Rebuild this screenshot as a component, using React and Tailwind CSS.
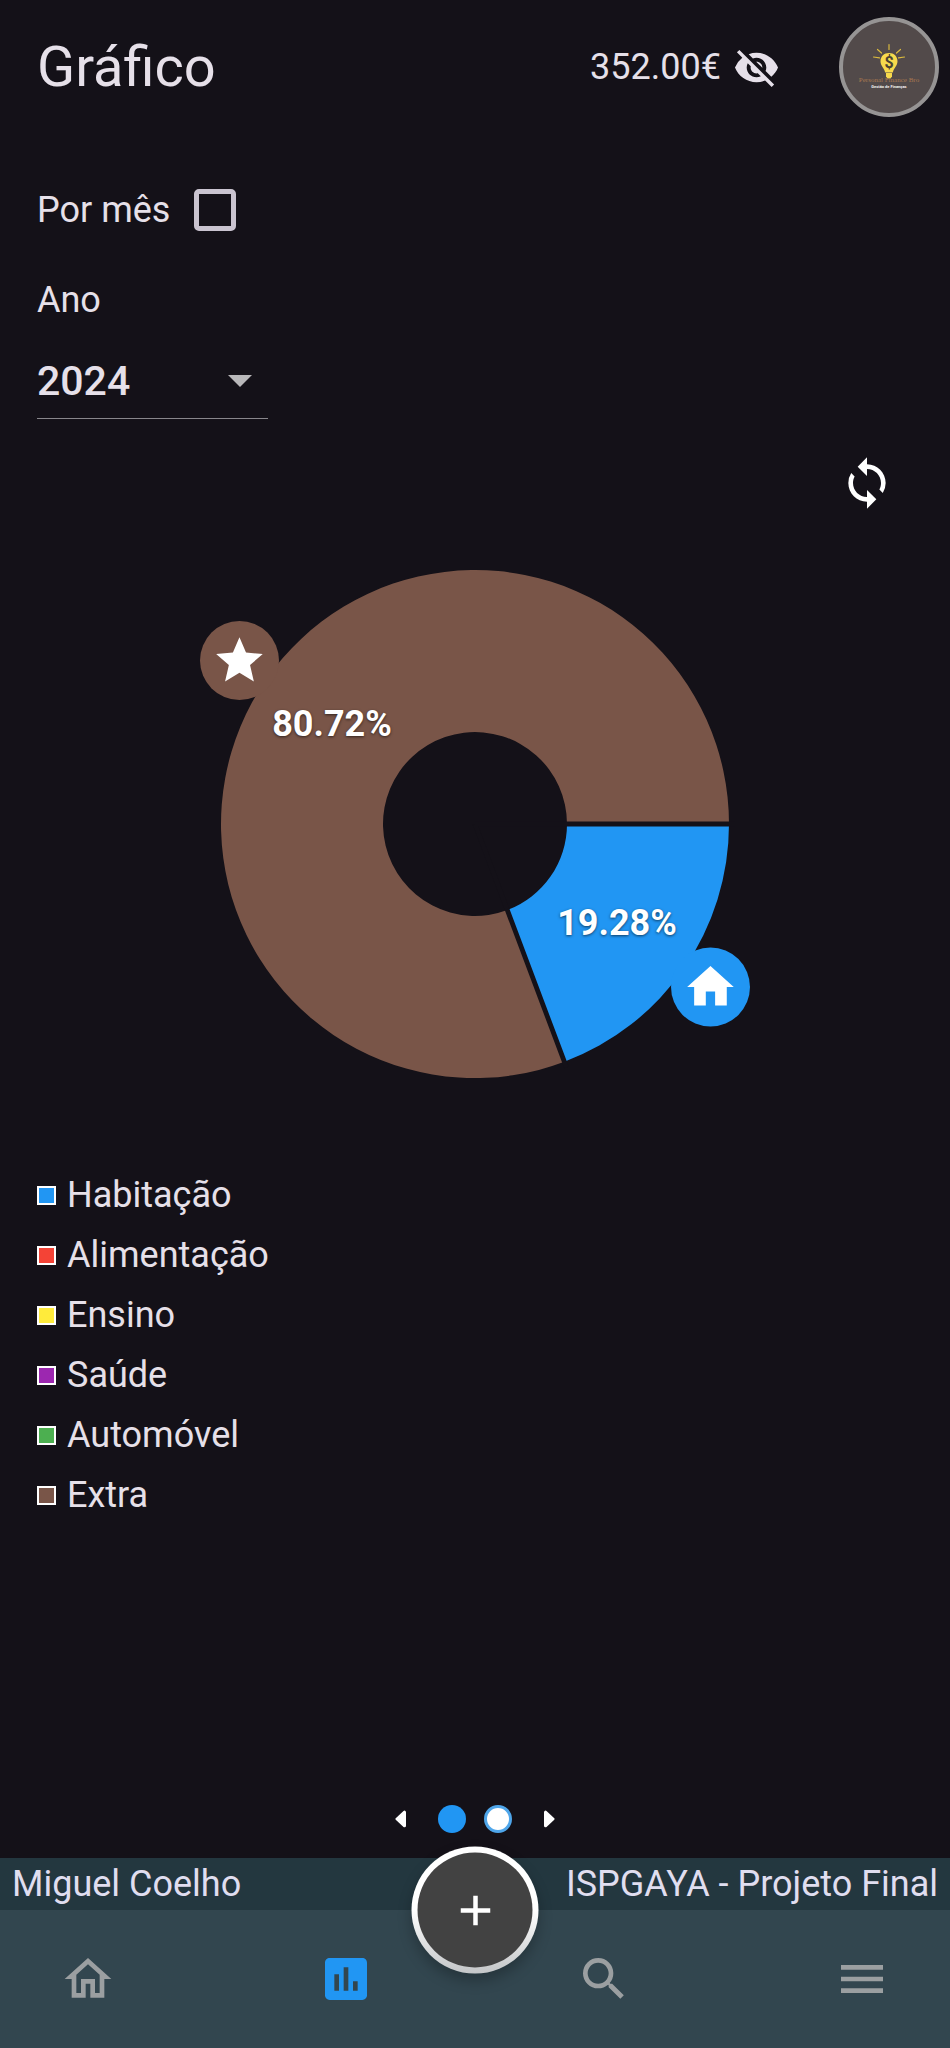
import { useState } from "react";
import {
  MdVisibilityOff,
  MdSync,
  MdSearch,
  MdMenu,
  MdInsertChart,
  MdOutlineHome,
} from "react-icons/md";

const CATEGORIES = [
  { name: "Habitação", color: "bg-[#2196f3]" },
  { name: "Alimentação", color: "bg-[#f44336]" },
  { name: "Ensino", color: "bg-[#ffeb3b]" },
  { name: "Saúde", color: "bg-[#9c27b0]" },
  { name: "Automóvel", color: "bg-[#4caf50]" },
  { name: "Extra", color: "bg-[#795548]" },
];

function Avatar() {
  return (
    <button
      type="button"
      aria-label="Perfil"
      className="size-[100px] overflow-hidden rounded-full border-4 border-[#969494] bg-[#524a4a]"
    >
      <svg viewBox="0 0 92 92" className="size-full">
        <g stroke="#d9b93f" strokeWidth="1.2" strokeLinecap="round">
          <path d="M46 23.500v5M34.500 28.500l4 3.500M57.500 28.500l-4 3.500M30.500 36l6 .8M61.500 36l-6 .8" />
        </g>
        <path
          d="M46 32c-5 0-8.500 3.500-8.500 8.300 0 4.500 3.500 6.500 4.700 11.200h7.600c1.200-4.700 4.700-6.700 4.700-11.200 0-4.800-3.500-8.300-8.500-8.300z"
          fill="#f7d94c"
        />
        <path d="M43 52h6v3.500l-1.500 2h-3l-1.500-2z" fill="#f7d94c" />
        <text x="46" y="47" textAnchor="middle" fontSize="16" fontWeight="700" fill="#4a4233">
          $
        </text>
        <text
          x="46"
          y="61"
          textAnchor="middle"
          fontSize="7"
          fill="#a87850"
          className="font-['Liberation_Serif',serif]"
        >
          Personal Finance Bro
        </text>
        <text x="46" y="66.500" textAnchor="middle" fontSize="4" fontWeight="700" fill="#f2f0ee">
          Gestão de Finanças
        </text>
      </svg>
    </button>
  );
}

function Donut() {
  return (
    <svg
      viewBox="-300 -264 600 530"
      className="mx-auto mt-[49px] block w-full max-w-[600px]"
      role="img"
      aria-label="Extra 80.72%, Habitação 19.28%"
    >
      <path d="M254 0A254 254 0 1 0 89.400 237.800L32.400 86.100A92 92 0 1 1 92 0Z" fill="#795548" />
      <path d="M254 0A254 254 0 0 1 89.400 237.800L32.400 86.100A92 92 0 0 0 92 0Z" fill="#2196f3" />
      <path d="M0 0H260M0 0L91.500 243.400" stroke="#141118" strokeWidth="4.800" />

      <circle cx="-235.500" cy="-163.500" r="39.500" fill="#795548" />
      <path
        transform="translate(-263.500 -191.500) scale(2.330)"
        fill="#fff"
        d="M12 17.270L18.180 21l-1.640-7.030L22 9.240l-7.190-.61L12 2 9.190 8.630 2 9.240l5.460 4.730L5.820 21z"
      />
      <circle cx="235.500" cy="163" r="39.500" fill="#2196f3" />
      <path
        transform="translate(207.500 135) scale(2.330)"
        fill="#fff"
        d="M10 20v-6h4v6h5v-8h3L12 3 2 12h3v8z"
      />

      <g
        className="[text-shadow:0_1px_3px_rgba(0,0,0,0.6)]"
        fill="#fff"
        fontSize="36"
        fontWeight="700"
        textAnchor="middle"
      >
        <text x="-143" y="-88">80.72%</text>
        <text x="142" y="111">19.28%</text>
      </g>
    </svg>
  );
}

function Pager({ page, onChange }) {
  const dot = "size-7 rounded-full";
  return (
    <div className="mt-auto mb-[25px] flex items-center justify-center pt-10">
      <button type="button" aria-label="Anterior" onClick={() => onChange(0)} className="mr-8">
        <svg viewBox="0 0 11 18" className="h-[18px] w-[11px]">
          <path d="M9.500 2.200V15.800L2 9Z" fill="#fff" stroke="#fff" strokeWidth="3" strokeLinejoin="round" />
        </svg>
      </button>
      <div className="flex gap-[18px]">
        {[0, 1].map((i) => (
          <button
            key={i}
            type="button"
            aria-label={`Página ${i + 1}`}
            onClick={() => onChange(i)}
            className={
              i === page ? `${dot} bg-[#2196f3]` : `${dot} border-[3px] border-[#4fa6ea] bg-white`
            }
          />
        ))}
      </div>
      <button type="button" aria-label="Seguinte" onClick={() => onChange(1)} className="ml-8">
        <svg viewBox="0 0 11 18" className="h-[18px] w-[11px]">
          <path d="M1.500 2.200V15.800L9 9Z" fill="#fff" stroke="#fff" strokeWidth="3" strokeLinejoin="round" />
        </svg>
      </button>
    </div>
  );
}

export default function App() {
  const [page, setPage] = useState(0);

  return (
    <div className="flex min-h-screen flex-col bg-[#141118] font-['Roboto',sans-serif] text-[36px] leading-[40px] text-[#e6e0e9]">
      <header className="flex h-[134px] items-center pr-[11px] pl-[37px]">
        <h1 className="text-[56px] leading-[64px]">Gráfico</h1>
        <span className="ml-auto">352.00€</span>
        <button type="button" aria-label="Ocultar saldo" className="mr-[59px] ml-3">
          <MdVisibilityOff className="size-[47px]" />
        </button>
        <Avatar />
      </header>

      <main className="flex flex-1 flex-col">
        <div className="mt-12 flex h-14 items-center gap-6 pl-[37px]">
          <label htmlFor="por-mes">Por mês</label>
          <input
            id="por-mes"
            type="checkbox"
            className="size-[42px] appearance-none rounded-[5px] border-[5px] border-[#cac4d0] checked:bg-[#2196f3]"
          />
        </div>

        <label htmlFor="ano" className="mt-[42px] self-start pl-[37px]">
          Ano
        </label>
        <div className="mt-6 ml-[37px] grid w-[231px] items-center border-b border-[#88868b]">
          <select
            id="ano"
            defaultValue="2024"
            className="col-start-1 row-start-1 h-[74px] w-full appearance-none bg-transparent text-[41px] leading-[48px] font-medium"
          >
            <option>2024</option>
            <option>2023</option>
          </select>
          <svg
            viewBox="0 0 24 12"
            className="pointer-events-none col-start-1 row-start-1 mr-4 h-3 w-6 justify-self-end"
          >
            <path d="M0 0H24L12 12Z" fill="#b9b8ba" />
          </svg>
        </div>

        <button type="button" aria-label="Atualizar" className="mt-9 mr-[55px] self-end text-white">
          <MdSync className="size-14" />
        </button>

        <Donut />

        <ul className="mt-[75px] pl-[37px]">
          {CATEGORIES.map(({ name, color }) => (
            <li key={name} className="flex h-[60px] items-center gap-[11px]">
              <span className={`size-[19px] border-2 border-white ${color}`} />
              {name}
            </li>
          ))}
        </ul>

        <Pager page={page} onChange={setPage} />
      </main>

      <footer className="relative">
        <div className="flex h-[52px] items-center justify-between bg-[#23373f] px-3 text-[#e0def0]">
          <span>Miguel Coelho</span>
          <span>ISPGAYA - Projeto Final</span>
        </div>
        <nav className="flex h-[138px] items-center justify-between bg-[#32464f] px-[60px] text-[#9b9fa1]">
          <a href="#inicio" aria-label="Início">
            <MdOutlineHome className="size-14" />
          </a>
          <a href="#grafico" aria-label="Gráfico" className="text-[#2196f3]">
            <MdInsertChart className="size-14" />
          </a>
          <a href="#pesquisa" aria-label="Pesquisar">
            <MdSearch className="size-14" />
          </a>
          <a href="#menu" aria-label="Menu">
            <MdMenu className="size-14" />
          </a>
        </nav>
        <button
          type="button"
          aria-label="Adicionar"
          className="absolute top-[52px] left-1/2 size-[127px] -translate-x-1/2 -translate-y-1/2 rounded-full bg-linear-to-b from-white from-50% to-[#c4c6c8] p-[6px] shadow-[0_7px_14px_rgba(0,0,0,0.25)]"
        >
          <span className="flex size-full items-center justify-center rounded-full bg-[#424242]">
            <svg viewBox="0 0 30 30" className="size-[30px]">
              <path d="M15 0V30M0 15H30" stroke="#fff" strokeWidth="4.500" />
            </svg>
          </span>
        </button>
      </footer>
    </div>
  );
}
